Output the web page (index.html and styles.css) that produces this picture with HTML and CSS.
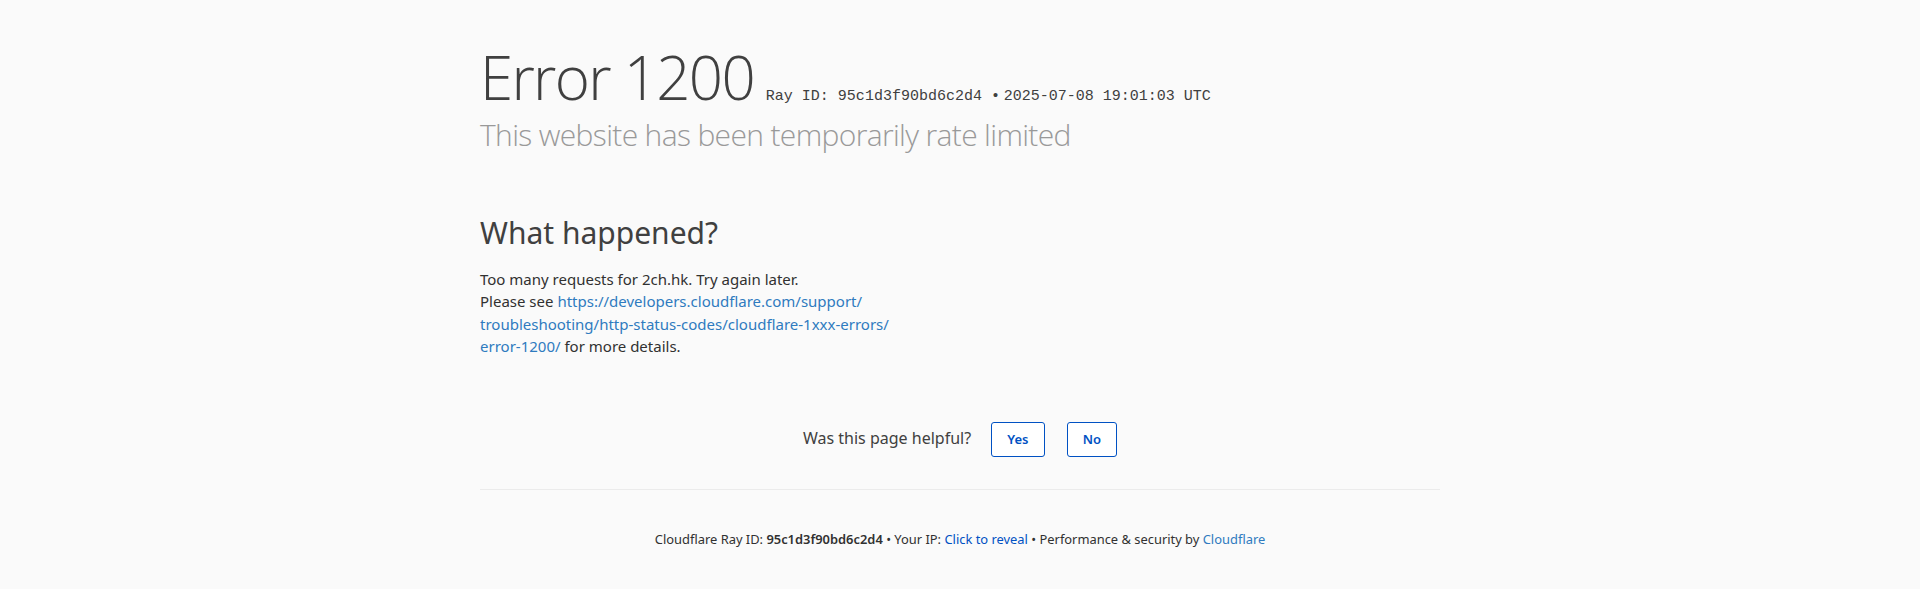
FILE: index.html
```
<!DOCTYPE html>
<html lang="en">
<head>
    <meta charset="UTF-8">
    <meta name="viewport" content="width=device-width, initial-scale=1.0">
    <title>Error 1200 | Cloudflare</title>
    <link rel="stylesheet" href="styles.css">
</head>
<body>

<div id="cf-wrapper">
    <header class="error-header">
        <h1 class="headline">Error 1200</h1>
        <span class="ray-id">Ray ID: 95c1d3f90bd6c2d4 &bull;</span>
        <span class="ray-id">2025-07-08 19:01:03 UTC</span>
        <h2 class="subheadline">This website has been temporarily rate limited</h2>
    </header>

    <!-- What happened -->
    <section class="details">
        <div class="what-happened">
            <h2>What happened?</h2>
            <p>Too many requests for 2ch.hk. Try again later.<br>Please see <a href="#">https://developers.cloudflare.com/support/<wbr>troubleshooting/<wbr>http-status-codes/<wbr>cloudflare-1xxx-errors/<wbr><span class="nowrap">error-1200/</span></a> for more details.</p>
        </div>
    </section>

    <!-- Feedback -->
    <div class="feedback">
        Was this page helpful?
        <button class="feedback-btn btn-yes" type="button">Yes</button>
        <button class="feedback-btn btn-no" type="button">No</button>
    </div>

    <div class="error-footer">
        <p>
            <span>Cloudflare Ray ID: <strong>95c1d3f90bd6c2d4</strong></span>
            <span class="sep">&bull;</span>
            <span>Your IP: <button class="reveal" type="button">Click to reveal</button></span>
            <span class="sep">&bull;</span>
            <span>Performance &amp; security by <a href="#">Cloudflare</a></span>
        </p>
    </div>
</div>

</body>
</html>
```

FILE: styles.css
```
* {
    margin: 0;
    padding: 0;
    box-sizing: border-box;
}

body {
    font-family: "Noto Sans", "Open Sans", sans-serif;
    font-size: 15px;
    line-height: 1.5;
    color: #313131;
    background-color: #fafafa;
}

a {
    color: #2f7bbf;
    text-decoration: none;
}

.nowrap {
    white-space: nowrap;
}

.error-header {
    width: 960px;
    margin: 0 auto 60px;
    padding-top: 40px;
}

.headline {
    display: inline-block;
    margin-right: 8px;
    font-family: "Open Sans", "Noto Sans", sans-serif;
    font-size: 60px;
    font-weight: 300;
    line-height: 1.25;
    letter-spacing: -1.7px;
    color: #404040;
}

.ray-id {
    display: inline-block;
    font-family: "Liberation Mono", "Courier New", monospace;
    font-size: 15px;
    color: #404040;
}

.subheadline {
    font-family: "Open Sans", "Noto Sans", sans-serif;
    font-size: 30px;
    font-weight: 300;
    line-height: 1.3;
    letter-spacing: -0.65px;
    color: #999;
}

.details {
    width: 960px;
    margin: 0 auto 32px;
}

.what-happened {
    width: 50%;
}

.what-happened h2 {
    font-size: 30px;
    font-weight: 400;
    line-height: 1.25;
    margin-bottom: 16px;
    color: #404040;
}

.feedback {
    padding: 32px 0;
    text-align: center;
    font-size: 16px;
    color: #404040;
}

.feedback-btn {
    margin-left: 16px;
    padding: 7px 15px;
    font-family: inherit;
    font-size: 13px;
    font-weight: 600;
    line-height: 19px;
    color: #0051c3;
    background-color: #fff;
    border: 1px solid #0051c3;
    border-radius: 3px;
    vertical-align: middle;
    cursor: pointer;
}

.btn-no {
    margin-left: 18px;
}

.error-footer {
    width: 960px;
    margin: 0 auto;
    padding: 40px 0;
    text-align: center;
    font-size: 12.9px;
    border-top: 1px solid #ebebeb;
}

.error-footer strong {
    font-weight: 600;
}

.reveal {
    font: inherit;
    color: #0051c3;
    background: none;
    border: 0;
    cursor: pointer;
}
```
